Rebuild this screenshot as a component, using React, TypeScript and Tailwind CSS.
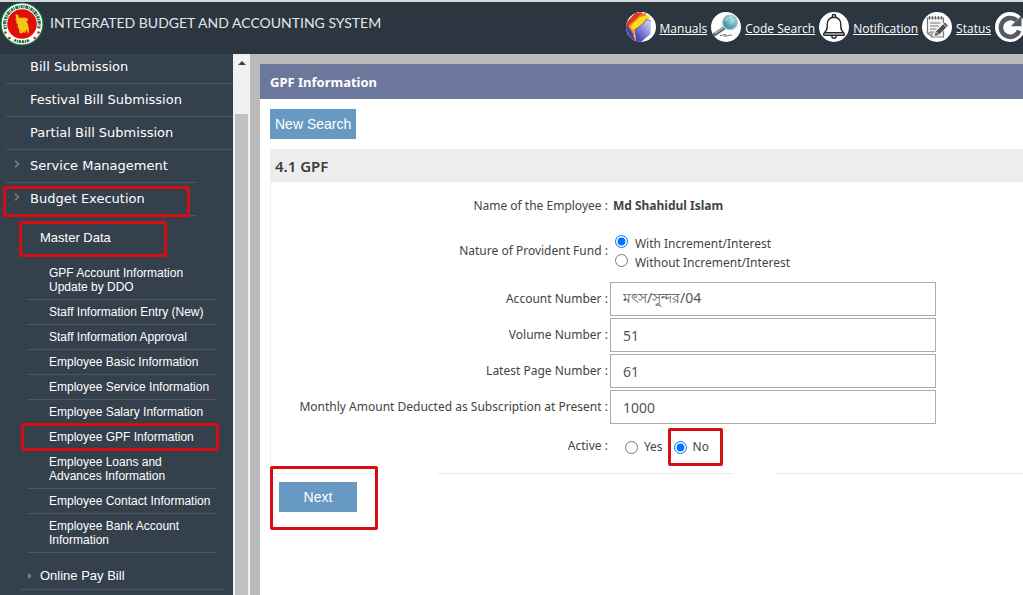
import type { ReactNode } from "react";

const topMenu = [
  { label: "Bill Submission", nested: false },
  { label: "Festival Bill Submission", nested: false },
  { label: "Partial Bill Submission", nested: false },
  { label: "Service Management", nested: true },
];

const masterData: string[][] = [
  ["GPF Account Information", "Update by DDO"],
  ["Staff Information Entry (New)"],
  ["Staff Information Approval"],
  ["Employee Basic Information"],
  ["Employee Service Information"],
  ["Employee Salary Information"],
  ["Employee GPF Information"],
  ["Employee Loans and", "Advances Information"],
  ["Employee Contact Information"],
  ["Employee Bank Account", "Information"],
];

function Marker({ className }: { className: string }) {
  return (
    <span
      aria-hidden="true"
      className={`pointer-events-none absolute z-10 rounded-[2px] border-3 border-[#d40f14] ${className}`}
    />
  );
}

function Chevron() {
  return (
    <svg viewBox="0 0 6 8" className="absolute top-2.5 left-2 h-2 w-1.5" aria-hidden="true">
      <path d="M1 0.8 4.4 4 1 7.2" fill="none" stroke="#78828c" strokeWidth="1.5" />
    </svg>
  );
}

function Emblem() {
  return (
    <svg viewBox="0 0 44 44" className="h-11 w-11 shrink-0" aria-hidden="true">
      <circle cx="22" cy="22" r="21" fill="#fff" stroke="#1b7a3a" strokeWidth="1.2" />
      <path
        d="M5.6 27A17.2 17.2 0 1 1 38.4 27"
        fill="none"
        stroke="#24713f"
        strokeWidth="3.4"
        strokeDasharray="2.2 .7 1.2 .8 2.8 .6 1 .9"
      />
      <path
        d="M5.6 25.6A16.2 16.2 0 1 1 38.4 25.6"
        fill="none"
        stroke="#fff"
        strokeWidth=".7"
        strokeDasharray="1.5 1.1"
      />
      <path
        d="M14.3 38A17.6 17.6 0 0 0 29.7 38"
        fill="none"
        stroke="#24713f"
        strokeWidth="2.8"
        strokeDasharray="2 .7 1.2 .7 2.6 .7"
      />
      <g fill="#dd1b16">
        <circle cx="5.5" cy="30.5" r="1.3" />
        <circle cx="9.4" cy="36" r="1.3" />
        <circle cx="38.5" cy="30.5" r="1.3" />
        <circle cx="34.6" cy="36" r="1.3" />
      </g>
      <circle cx="22" cy="22" r="14.8" fill="#e01009" />
      <path
        d="M16.2 12.2 18.3 13.6 18.7 15.5 21.5 16 24 15.6 27.5 16.4 28.2 18 26.3 20 27.7 21.2 28.4 24.6 29 28.5 28.2 32.6 27.1 29 26 27.3 25.4 31 23.3 30 22.5 31.5 19.5 30.8 18.9 27 17.6 24.5 18 22.5 16.3 21 16.8 18.9 15.2 17.5 16.4 15.8 15.5 13.6Z"
        fill="#f8c612"
      />
    </svg>
  );
}

function Disc({ children }: { children: ReactNode }) {
  return (
    <svg viewBox="0 0 30 30" className="h-[30px] w-[30px] shrink-0" aria-hidden="true">
      <circle cx="15" cy="15" r="15" fill="#fff" />
      {children}
    </svg>
  );
}

function ManualsIcon() {
  return (
    <Disc>
      <defs>
        <clipPath id="manuals-clip">
          <circle cx="15" cy="15" r="15" />
        </clipPath>
        <linearGradient id="manuals-blue" x1="1" y1="0" x2="0.2" y2="1">
          <stop offset="0" stopColor="#e2e2fb" />
          <stop offset="0.5" stopColor="#8d8bdc" />
          <stop offset="1" stopColor="#3c38b0" />
        </linearGradient>
      </defs>
      <g clipPath="url(#manuals-clip)">
        <path d="M0 11 9 1 15 0 17 2 4 21 0 17Z" fill="#d93a22" />
        <path d="M3 13 15 2 20 1 20 7 8 23 3 20Z" fill="#ef7a1a" />
        <path d="M4.5 14 9 9.5 14 5 21 3 24 6 10 25Z" fill="#ffd91c" />
        <path d="M1 12 7 22 10 30 4 26 0 18Z" fill="#4a3fae" />
        <path d="M8.5 18 18 11 20 7.5 25 9 24.5 22 15 30 10 30Z" fill="url(#manuals-blue)" />
        <path d="M8.5 18 18 11 20 7.5 25 9" fill="none" stroke="#4b49a5" strokeWidth="0.7" />
        <path d="M3 14 8 19 9.8 29" fill="none" stroke="#f7a31c" strokeWidth="1.3" />
      </g>
    </Disc>
  );
}

function SearchIcon() {
  return (
    <Disc>
      <defs>
        <radialGradient id="search-lens" cx="0.65" cy="0.35" r="0.75">
          <stop offset="0" stopColor="#b9e0e8" />
          <stop offset="0.55" stopColor="#62a9bb" />
          <stop offset="1" stopColor="#347d95" />
        </radialGradient>
      </defs>
      <path d="M9 23.6 15 22.4 13.5 24.4 21 22.8" fill="none" stroke="#5d6870" strokeWidth="0.9" />
      <path d="M13.4 15.8 3.5 22.5" stroke="#566a78" strokeWidth="3.6" strokeLinecap="round" />
      <path d="M13 15.3 4 21.4" stroke="#aebfca" strokeWidth="1.3" strokeLinecap="round" />
      <circle cx="19" cy="10.4" r="7.3" fill="url(#search-lens)" stroke="#a5c6ce" strokeWidth="1.3" />
      <path d="M14.5 8.8A5.6 5.6 0 0 1 21 5.2" fill="none" stroke="#d9f0f3" strokeWidth="1.2" />
    </Disc>
  );
}

function BellIcon() {
  return (
    <Disc>
      <g fill="none" stroke="#20262b" strokeWidth="1.4" strokeLinejoin="round" strokeLinecap="round">
        <path d="M4.8 21.4C7.2 19.2 8.2 17.7 8.2 14.7V12.4C8.2 8.2 10.7 5.2 15 5.2S21.8 8.2 21.8 12.4V14.7C21.8 17.7 22.8 19.2 25.2 21.4V23.2H4.8Z" />
        <path d="M6 20.8H24M13.3 5.3V4.2A1.7 1.7 0 0 1 16.7 4.2V5.3M12.8 24A2.2 2.2 0 0 0 17.2 24" />
      </g>
    </Disc>
  );
}

function StatusIcon() {
  return (
    <Disc>
      <path d="M5.5 6H21.5V25H10L5.5 21Z" fill="#f5f5f5" stroke="#777" strokeWidth="1.2" />
      <path d="M5.5 21H10V25" fill="none" stroke="#777" />
      <path d="M7.5 4V7.5M10.5 4V7.5M13.5 4V7.5M16.5 4V7.5M19.5 4V7.5" stroke="#666" strokeWidth="1.2" />
      <path d="M8 11H18.5M8 14H17M8 17H14.5M8 20H12.5" stroke="#777" strokeWidth="1.1" />
      <path d="M12 24.5 13.6 19.4 22.8 10.2 26.3 13.7 17.1 22.9Z" fill="#505050" stroke="#fff" strokeWidth="0.7" />
      <path d="M21.2 11.8 24.7 15.3M13.8 19.6 16.9 22.7" stroke="#fff" strokeWidth="0.8" />
    </Disc>
  );
}

function RefreshIcon() {
  return (
    <Disc>
      <path
        d="M24.2 18.6A9.4 9.4 0 1 1 21.6 8.4"
        fill="none"
        stroke="#555b60"
        strokeWidth="4.6"
      />
      <path d="M26.5 3.5V14.2H15.8Z" fill="#555b60" />
    </Disc>
  );
}

function HeaderLink({ icon, label }: { icon: ReactNode; label: string }) {
  return (
    <a href="#" className="flex items-center gap-1 whitespace-nowrap text-white">
      {icon}
      <span className="pt-1 font-['Open_Sans',sans-serif] text-xs underline">{label}</span>
    </a>
  );
}

function TextRow({ id, label, value }: { id: string; label: string; value: string }) {
  return (
    <>
      <label htmlFor={id} className="text-right">
        {label} :
      </label>
      <input
        id={id}
        type="text"
        defaultValue={value}
        className="h-[34px] w-full max-w-[326px] border border-[#acacac] bg-white px-3 text-sm text-[#555]"
      />
    </>
  );
}

export default function App() {
  return (
    <div className="flex h-screen flex-col overflow-hidden bg-white font-['Noto_Sans','Open_Sans',sans-serif] text-[13px] text-[#444]">
      <header className="flex h-[54px] shrink-0 items-start justify-between border-t-2 border-[#d3d7da] bg-[#2b3641]">
        <div className="flex items-start gap-1.5">
          <Emblem />
          <h1 className="pt-[9px] font-['Lato',sans-serif] text-sm leading-6 whitespace-nowrap text-[#e3e6e8]">
            INTEGRATED BUDGET AND ACCOUNTING SYSTEM
          </h1>
        </div>
        <nav className="-mr-0.5 flex gap-1 pt-2.5">
          <HeaderLink icon={<ManualsIcon />} label="Manuals" />
          <HeaderLink icon={<SearchIcon />} label="Code Search" />
          <HeaderLink icon={<BellIcon />} label="Notification" />
          <HeaderLink icon={<StatusIcon />} label="Status" />
          <a href="#" aria-label="Refresh">
            <RefreshIcon />
          </a>
        </nav>
      </header>

      <div className="flex min-h-0 flex-1">
        <aside className="flex w-[250px] shrink-0">
          <nav className="min-w-0 flex-1 overflow-hidden bg-[#35404d] font-['Liberation_Sans',sans-serif] text-white">
            <ul className="-mt-[3px] pl-1.5 font-['DejaVu_Sans',sans-serif] text-[13px]">
              {topMenu.map((item) => (
                <li
                  key={item.label}
                  className={`relative border-b border-[#4b5661] ${item.nested ? "mr-9" : ""}`}
                >
                  {item.nested && <Chevron />}
                  <a href="#" className="block pl-6 leading-8 whitespace-nowrap">
                    {item.label}
                  </a>
                </li>
              ))}
              <li className="relative mr-9 border-b border-[#4b5661]">
                <Marker className="-inset-x-[3px] top-[3px] -bottom-0.5 mr-2.5" />
                <Chevron />
                <a href="#" className="block pl-6 leading-8 whitespace-nowrap">
                  Budget Execution
                </a>
              </li>
            </ul>

            <div className="relative mt-[5px] mr-[66px] ml-[19px] h-9">
              <Marker className="inset-0" />
              <a href="#" className="block pl-[21px] text-[13px] leading-[34px]">
                Master Data
              </a>
            </div>

            <ul className="mr-4 ml-[27px] pt-1 text-xs leading-[14px]">
              {masterData.map((lines) => (
                <li
                  key={lines.join(" ")}
                  className="relative border-b border-[#4b5661] pt-[5px] pb-[5px]"
                >
                  {lines[0] === "Employee GPF Information" && (
                    <Marker className="-top-0.5 -right-0.5 -bottom-0.5 -left-1.5" />
                  )}
                  <a href="#" className="block pl-[22px] whitespace-nowrap">
                    {lines.map((line) => (
                      <span key={line} className="block">
                        {line}
                      </span>
                    ))}
                  </a>
                </li>
              ))}
            </ul>

            <div className="mt-2.5 mr-2 ml-5 flex items-center gap-2 border-b border-[#4b5661] pl-2 text-[13px] leading-[26px]">
              <svg viewBox="0 0 4 6" className="h-1.5 w-1" aria-hidden="true">
                <path d="M0 0 4 3 0 6Z" fill="#78828c" />
              </svg>
              <a href="#">Online Pay Bill</a>
            </div>
          </nav>

          <div className="flex w-[17px] flex-col items-center bg-[#f1f1f1]" aria-hidden="true">
            <svg viewBox="0 0 8 4" className="my-[7px] h-1 w-2 shrink-0">
              <path d="M0 4 4 0 8 4Z" fill="#404040" />
            </svg>
            <div className="mt-[42px] w-[13px] flex-1 bg-[#c1c1c1]" />
          </div>
        </aside>

        <div className="flex min-w-0 flex-1 bg-[#bababa] pt-2.5 pl-2.5">
          <main className="min-w-0 flex-1 bg-white">
            <h2 className="bg-[#6c789b] pt-0.5 pl-2.5 text-[13px] leading-[33px] font-bold text-white">
              GPF Information
            </h2>

            <div className="pt-2.5 pl-2.5">
              <button
                type="button"
                className="h-[30px] bg-[#6799c3] px-[5px] font-['Liberation_Sans',sans-serif] text-sm text-white"
              >
                New Search
              </button>

              <section className="mt-2.5">
                <h3 className="bg-[#ededed] pt-px pl-[5px] text-[15px] leading-8 font-semibold text-[#3c3c3c]">
                  4.1 GPF
                </h3>

                <form>
                  <div className="grid grid-cols-[44.8%_minmax(0,1fr)] items-center gap-x-0.5 gap-y-0.5 border-l border-[#eee] pt-2.5 pb-[7px] text-xs">
                    <span className="text-right leading-7">Name of the Employee :</span>
                    <span className="pl-[3px] leading-7 font-bold">Md Shahidul Islam</span>

                    <span id="fund-label" className="text-right">
                      Nature of Provident Fund :
                    </span>
                    <div
                      role="radiogroup"
                      aria-labelledby="fund-label"
                      className="flex flex-col items-start pt-3 pb-2 pl-[5px] leading-[19px]"
                    >
                      <label className="flex items-start gap-[7px]">
                        <input type="radio" name="fund" defaultChecked className="mt-px h-[13px] w-[13px]" />
                        With Increment/Interest
                      </label>
                      <label className="flex items-start gap-[7px]">
                        <input type="radio" name="fund" className="mt-px h-[13px] w-[13px]" />
                        Without Increment/Interest
                      </label>
                    </div>

                    <TextRow id="account" label="Account Number" value="মৎস/সুন্দর/04" />
                    <TextRow id="volume" label="Volume Number" value="51" />
                    <TextRow id="page" label="Latest Page Number" value="61" />
                    <TextRow
                      id="amount"
                      label="Monthly Amount Deducted as Subscription at Present"
                      value="1000"
                    />

                    <span id="active-label" className="text-right">
                      Active :
                    </span>
                    <div
                      role="radiogroup"
                      aria-labelledby="active-label"
                      className="flex items-center gap-[5px] pt-0.5 pl-[15px]"
                    >
                      <label className="flex items-center gap-1.5">
                        <input type="radio" name="active" className="h-[13px] w-[13px]" />
                        Yes
                      </label>
                      <label className="relative flex items-center gap-1.5 px-1.5 leading-[38px]">
                        <Marker className="top-0 -right-2 bottom-0 left-0" />
                        <input type="radio" name="active" defaultChecked className="h-[13px] w-[13px]" />
                        No
                      </label>
                    </div>
                  </div>

                  <div className="flex" aria-hidden="true">
                    <div className="w-[107px] border-t border-[#eee]" />
                    <div className="ml-[61px] w-[295px] border-t border-[#e8e8e8]" />
                    <div className="ml-11 flex-1 border-t border-[#e8e8e8]" />
                  </div>

                  <div className="relative inline-block pt-2 pl-[9px]">
                    <Marker className="-top-2 -right-[21px] -bottom-[18px] left-0" />
                    <button
                      type="button"
                      className="block h-[30px] w-[78px] bg-[#6799c3] font-['Liberation_Sans',sans-serif] text-sm text-white"
                    >
                      Next
                    </button>
                  </div>
                </form>
              </section>
            </div>
          </main>
        </div>
      </div>
    </div>
  );
}
